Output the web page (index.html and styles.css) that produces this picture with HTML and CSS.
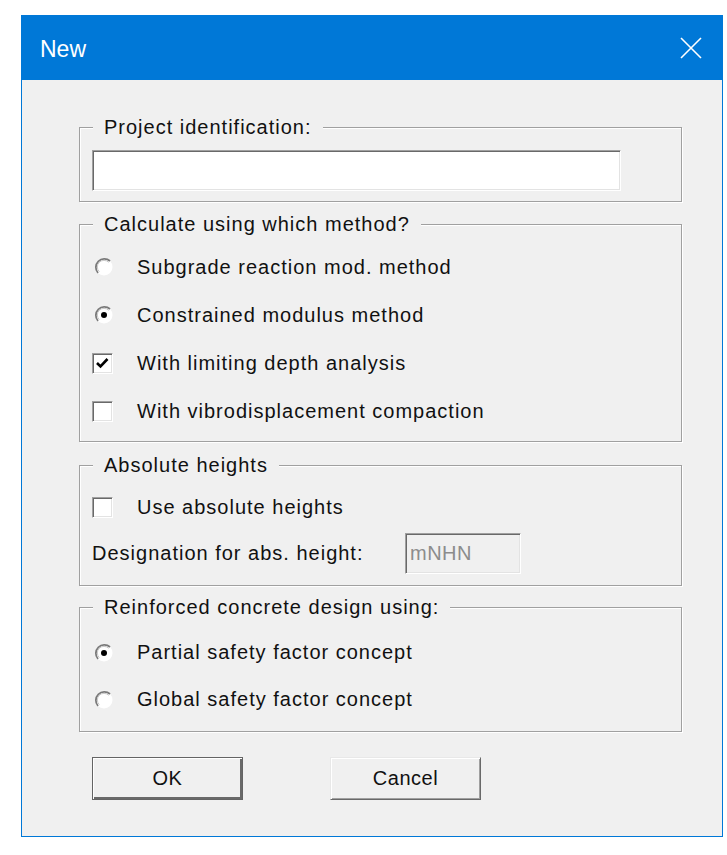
FILE: index.html
```html
<!DOCTYPE html>
<html>
<head>
<meta charset="utf-8">
<link rel="stylesheet" href="styles.css">
</head>
<body>
<div class="window">
  <div class="titlebar">
    <span class="title">New</span>
    <svg class="close" width="22" height="22" viewBox="0 0 22 22"><path d="M1 1 L21 21 M21 1 L1 21" stroke="#fff" stroke-width="1.6" fill="none"/></svg>
  </div>
  <div class="client">
    <div class="group g1">
      <span class="legend">Project identification:</span>
      <div class="edit wide"></div>
    </div>
    <div class="group g2">
      <span class="legend">Calculate using which method?</span>
      <div class="row r48"><span class="ctl"><svg class="radio" width="20" height="20" viewBox="0 0 20 20"><circle cx="10" cy="10" r="8.5" fill="#fff"/><path d="M4 16 A8.5 8.5 0 0 1 16 4" stroke="#7a7a7a" stroke-width="1.8" fill="none"/><path d="M5.3 14.7 A6.6 6.6 0 0 1 14.7 5.3" stroke="#c8c8c8" stroke-width="1" fill="none"/></svg></span><span class="lbl">Subgrade reaction mod. method</span></div>
      <div class="row r48"><span class="ctl"><svg class="radio" width="20" height="20" viewBox="0 0 20 20"><circle cx="10" cy="10" r="8.5" fill="#fff"/><path d="M4 16 A8.5 8.5 0 0 1 16 4" stroke="#7a7a7a" stroke-width="1.8" fill="none"/><path d="M5.3 14.7 A6.6 6.6 0 0 1 14.7 5.3" stroke="#c8c8c8" stroke-width="1" fill="none"/><circle cx="10" cy="10" r="3" fill="#000"/></svg></span><span class="lbl">Constrained modulus method</span></div>
      <div class="row r48"><span class="ctl"><span class="check"><svg width="17" height="17" viewBox="0 0 17 17"><path d="M3 8 L6.5 11.5 L13.5 4" stroke="#000" stroke-width="2.6" fill="none"/></svg></span></span><span class="lbl">With limiting depth analysis</span></div>
      <div class="row r48"><span class="ctl"><span class="check"></span></span><span class="lbl">With vibrodisplacement compaction</span></div>
    </div>
    <div class="group g3">
      <span class="legend">Absolute heights</span>
      <div class="row r48"><span class="ctl"><span class="check"></span></span><span class="lbl">Use absolute heights</span></div>
      <div class="row r44"><span class="lbl plain">Designation for abs. height:</span><div class="edit small disabled">mNHN</div></div>
    </div>
    <div class="group g4">
      <span class="legend">Reinforced concrete design using:</span>
      <div class="row r47"><span class="ctl"><svg class="radio" width="20" height="20" viewBox="0 0 20 20"><circle cx="10" cy="10" r="8.5" fill="#fff"/><path d="M4 16 A8.5 8.5 0 0 1 16 4" stroke="#7a7a7a" stroke-width="1.8" fill="none"/><path d="M5.3 14.7 A6.6 6.6 0 0 1 14.7 5.3" stroke="#c8c8c8" stroke-width="1" fill="none"/><circle cx="10" cy="10" r="3" fill="#000"/></svg></span><span class="lbl">Partial safety factor concept</span></div>
      <div class="row r47"><span class="ctl"><svg class="radio" width="20" height="20" viewBox="0 0 20 20"><circle cx="10" cy="10" r="8.5" fill="#fff"/><path d="M4 16 A8.5 8.5 0 0 1 16 4" stroke="#7a7a7a" stroke-width="1.8" fill="none"/><path d="M5.3 14.7 A6.6 6.6 0 0 1 14.7 5.3" stroke="#c8c8c8" stroke-width="1" fill="none"/></svg></span><span class="lbl">Global safety factor concept</span></div>
    </div>
    <div class="buttons">
      <div class="btn default">OK</div>
      <div class="btn">Cancel</div>
    </div>
  </div>
</div>
</body>
</html>
```

FILE: styles.css
```css
html, body {
  margin: 0;
  padding: 0;
  background: #ffffff;
}
body {
  font-family: "Liberation Sans", Arial, sans-serif;
}
.window {
  margin: 15px 0 0 21px;
  width: 702px;
  box-sizing: border-box;
  border: 1px solid #0078d7;
}
.titlebar {
  height: 64px;
  background: #0078d7;
  display: flex;
  align-items: center;
  justify-content: space-between;
  padding: 0 20px 0 18px;
}
.title {
  color: #ffffff;
  font-size: 23px;
  position: relative;
  top: 1px;
}
.close {
  display: block;
}
.client {
  background: #f0f0f0;
  height: 756px;
  box-sizing: border-box;
  padding: 47px 0 0 57px;
  font-size: 20px;
  letter-spacing: 1px;
  color: #111;
}
.group {
  position: relative;
  width: 603px;
  box-sizing: border-box;
  border: 1px solid #a0a0a0;
  box-shadow: inset 1px 1px 0 #ffffff, 1px 1px 0 #ffffff;
}
.legend {
  position: absolute;
  top: -12px;
  left: 13px;
  padding: 0 11px;
  line-height: 22px;
  background: #f0f0f0;
}
.g1 {
  height: 75px;
  padding: 22px 0 0 12px;
  margin-bottom: 22px;
}
.g2 {
  padding: 18px 0 6px 12px;
  margin-bottom: 23px;
}
.g3 {
  padding: 17px 0 10px 12px;
  margin-bottom: 21px;
}
.g4 {
  padding: 21px 0 8px 12px;
}
.row {
  display: flex;
  align-items: center;
}
.r48 { height: 48px; }
.r47 { height: 47px; }
.r44 { height: 44px; }
.ctl {
  width: 45px;
  display: flex;
  align-items: center;
}
.radio {
  display: block;
  margin-left: 2px;
}
.check {
  width: 21px;
  height: 21px;
  box-sizing: border-box;
  background: #ffffff;
  border: 1px solid;
  border-color: #a0a0a0 #ffffff #ffffff #a0a0a0;
  box-shadow: inset 1px 1px 0 #696969, inset -1px -1px 0 #e3e3e3;
  display: flex;
  align-items: center;
  justify-content: center;
}
.check svg {
  display: block;
}
.lbl {
  white-space: nowrap;
}
.plain {
  width: 313px;
}
.edit {
  box-sizing: border-box;
  background: #ffffff;
  border: 1px solid;
  border-color: #a0a0a0 #ffffff #ffffff #a0a0a0;
  box-shadow: inset 1px 1px 0 #696969, inset -1px -1px 0 #e3e3e3;
}
.wide {
  width: 529px;
  height: 41px;
}
.small {
  width: 116px;
  height: 41px;
  display: flex;
  align-items: center;
  padding-left: 4px;
  letter-spacing: 0.5px;
}
.disabled {
  background: #f0f0f0;
  color: #8c8c8c;
}
.buttons {
  display: flex;
  gap: 87px;
  margin: 25px 0 0 13px;
}
.btn {
  width: 151px;
  height: 43px;
  box-sizing: border-box;
  display: flex;
  align-items: center;
  justify-content: center;
  border: 1px solid;
  border-color: #e8e8e8 #696969 #696969 #e8e8e8;
  box-shadow: inset 1px 1px 0 #ffffff, inset -1px -1px 0 #a0a0a0;
  letter-spacing: 0.5px;
}
.default {
  border: 1px solid #646464;
  box-shadow: inset 1px 1px 0 #ffffff, inset -2px -2px 0 #696969;
}
```
